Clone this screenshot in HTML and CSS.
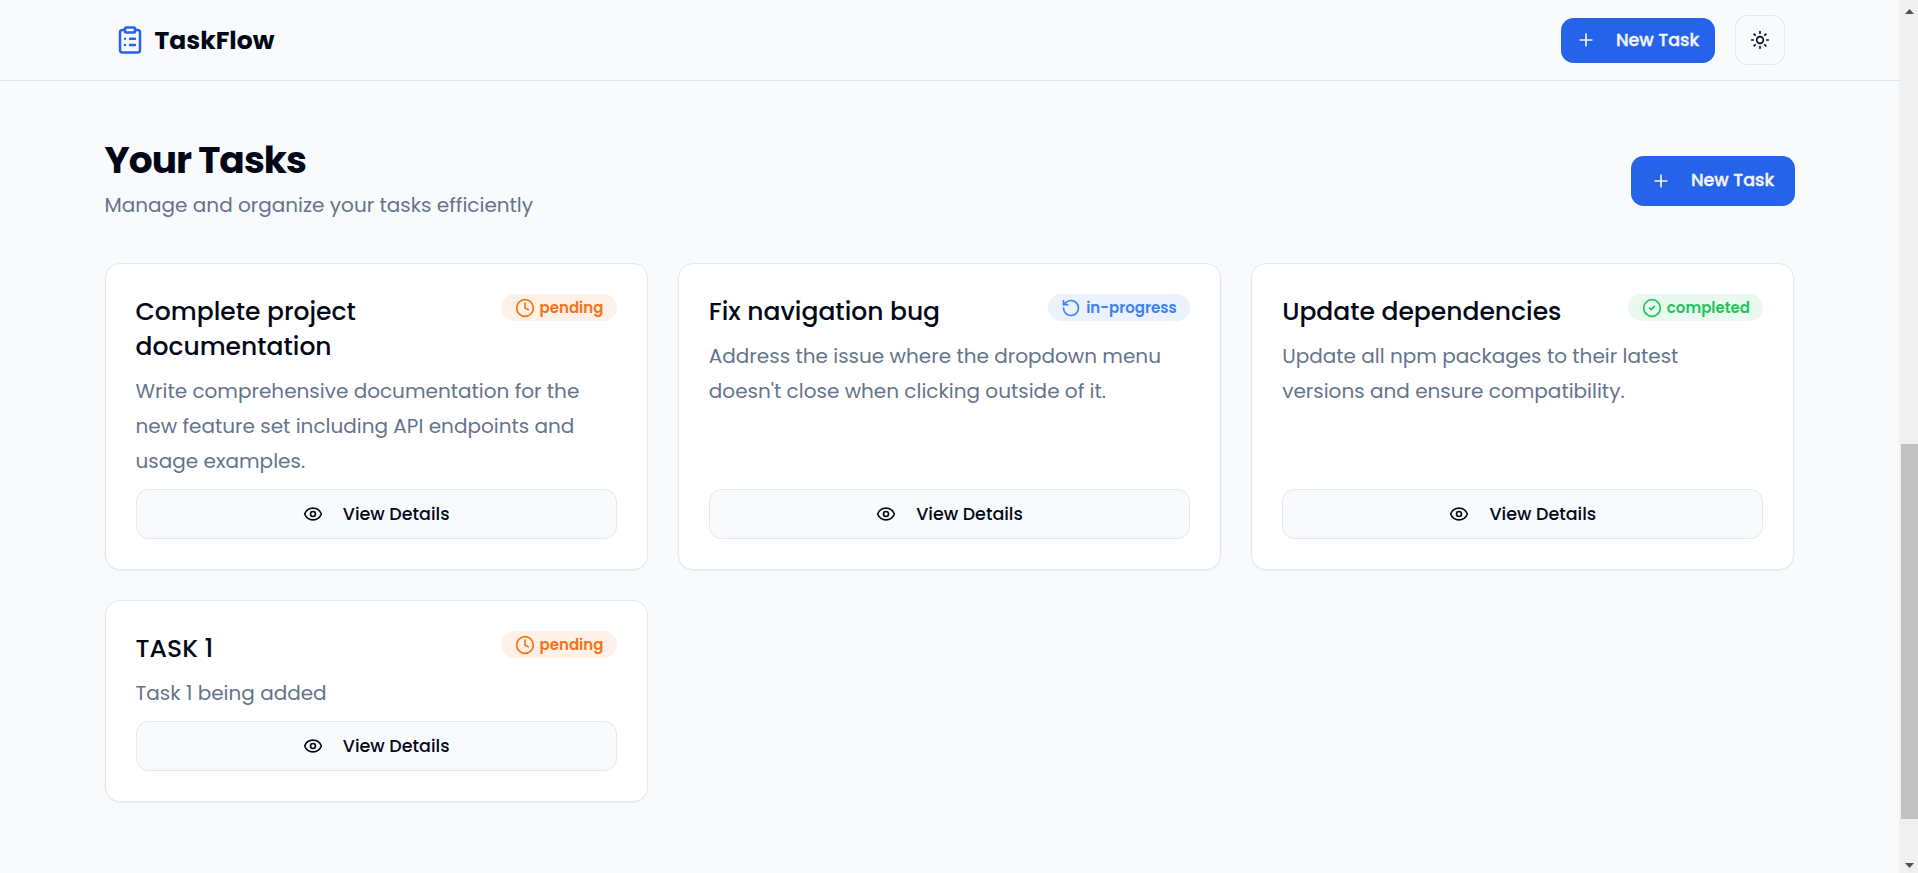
FILE: index.html
```html
<!DOCTYPE html>
<html lang="en">
<head>
<meta charset="utf-8">
<title>TaskFlow</title>
<link rel="stylesheet" href="styles.css">
</head>
<body>
<svg width="0" height="0" class="sprite" aria-hidden="true">
  <symbol id="plus" viewBox="0 0 24 24"><path d="M5 12h14M12 5v14"/></symbol>
  <symbol id="eye" viewBox="0 0 24 24"><path d="M2.06 12.35a1 1 0 0 1 0-.7 10.75 10.75 0 0 1 19.88 0 1 1 0 0 1 0 .7 10.75 10.75 0 0 1-19.88 0"/><circle cx="12" cy="12" r="3"/></symbol>
  <symbol id="clock" viewBox="0 0 24 24"><circle cx="12" cy="12" r="10"/><path d="M12 6v6l4 2"/></symbol>
  <symbol id="rotate" viewBox="0 0 24 24"><path d="M3 12a9 9 0 1 0 9-9 9.75 9.75 0 0 0-6.74 2.74L3 8"/><path d="M3 3v5h5"/></symbol>
  <symbol id="check" viewBox="0 0 24 24"><circle cx="12" cy="12" r="10"/><path d="m9 12 2 2 4-4"/></symbol>
</svg>
<div class="window">
  <div class="page">
    <header class="header">
      <div class="header-inner">
        <div class="brand">
          <svg class="brand-icon" viewBox="0 0 24 24"><rect x="8" y="2" width="8" height="4" rx="1"/><path d="M16 4h2a2 2 0 0 1 2 2v14a2 2 0 0 1-2 2H6a2 2 0 0 1-2-2V6a2 2 0 0 1 2-2h2M12 11h4M12 16h4M8 11h.01M8 16h.01"/></svg>
          <span class="brand-name">TaskFlow</span>
        </div>
        <div class="actions">
          <button class="btn-primary compact"><svg class="icon"><use href="#plus"/></svg><span>New Task</span></button>
          <button class="toggle"><svg class="icon" viewBox="0 0 24 24"><circle cx="12" cy="12" r="4"/><path d="M12 2v2M12 20v2M4.93 4.93l1.41 1.41M17.66 17.66l1.41 1.41M2 12h2M20 12h2M6.34 17.66l-1.41 1.41M19.07 4.93l-1.41 1.41"/></svg></button>
        </div>
      </div>
    </header>
    <main class="main">
      <div class="intro">
        <div class="intro-text">
          <h1 class="heading">Your Tasks</h1>
          <p class="subtitle">Manage and organize your tasks efficiently</p>
        </div>
        <button class="btn-primary"><svg class="icon"><use href="#plus"/></svg><span class="raised">New Task</span></button>
      </div>
      <div class="grid">
        <article class="card">
          <div class="card-top"><h2 class="title">Complete project documentation</h2><span class="badge pending"><svg class="icon"><use href="#clock"/></svg><span>pending</span></span></div>
          <p class="desc">Write comprehensive documentation for the new feature set including API endpoints and usage examples.</p>
          <button class="btn-view"><svg class="icon"><use href="#eye"/></svg><span>View Details</span></button>
        </article>
        <article class="card">
          <div class="card-top"><h2 class="title">Fix navigation bug</h2><span class="badge progress"><svg class="icon"><use href="#rotate"/></svg><span>in-progress</span></span></div>
          <p class="desc">Address the issue where the dropdown menu doesn't close when clicking outside of it.</p>
          <button class="btn-view"><svg class="icon"><use href="#eye"/></svg><span>View Details</span></button>
        </article>
        <article class="card">
          <div class="card-top"><h2 class="title">Update dependencies</h2><span class="badge completed"><svg class="icon"><use href="#check"/></svg><span>completed</span></span></div>
          <p class="desc">Update all npm packages to their latest versions and ensure compatibility.</p>
          <button class="btn-view"><svg class="icon"><use href="#eye"/></svg><span>View Details</span></button>
        </article>
        <article class="card">
          <div class="card-top"><h2 class="title">TASK 1</h2><span class="badge pending"><svg class="icon"><use href="#clock"/></svg><span>pending</span></span></div>
          <p class="desc">Task 1 being added</p>
          <button class="btn-view"><svg class="icon"><use href="#eye"/></svg><span>View Details</span></button>
        </article>
      </div>
    </main>
  </div>
  <div class="scrollbar">
    <svg class="arrow" viewBox="0 0 9 5"><path d="M4.5 0 9 5H0z"/></svg>
    <div class="thumb"></div>
    <svg class="arrow" viewBox="0 0 9 5"><path d="M4.5 5 9 0H0z"/></svg>
  </div>
</div>
</body>
</html>
```

FILE: styles.css
```css
* { box-sizing: border-box; margin: 0; padding: 0; }
body {
  font-family: Poppins, Inter, sans-serif;
  background: #f9fafc;
  color: #020817;
  overflow: hidden;
}
.sprite { display: block; }
.window { display: flex; height: 873px; }
.page { flex: 1; }
svg { flex: none; fill: none; stroke: currentColor; stroke-width: 2; stroke-linecap: round; stroke-linejoin: round; }
.icon { width: 20px; height: 20px; }

.header { height: 81px; border-bottom: 1px solid #dbe5f1; }
.header-inner { height: 80px; margin: 0 104.5px; padding: 0 10px; display: flex; align-items: center; justify-content: space-between; }
.brand { display: flex; align-items: center; gap: 10px; }
.brand-icon { width: 30px; height: 30px; color: #2563eb; }
.brand-name { font-size: 25px; font-weight: 700; line-height: 35px; }
.actions { display: flex; align-items: center; gap: 20px; }

button { font-family: inherit; font-size: 17.5px; line-height: 25px; white-space: nowrap; display: flex; align-items: center; justify-content: center; gap: 20px; color: inherit; }
.btn-primary { width: 164px; height: 50px; border: 0; border-radius: 12.5px; background: #2563eb; color: #f1f5fd; font-weight: 500; -webkit-text-stroke: 0.4px #f1f5fd; }
.btn-primary.compact { width: 154px; height: 45px; }
.raised { margin-bottom: 2px; }
.toggle { width: 50px; height: 50px; border: 1px solid #e2e8f0; border-radius: 12.5px; background: #f9fafc; }

.main { padding: 55px 104.5px 0; }
.intro { display: flex; align-items: center; justify-content: space-between; height: 90px; }
.intro-text { padding-bottom: 2px; }
.heading { font-size: 37.5px; line-height: 45px; font-weight: 700; letter-spacing: -0.9375px; }
.subtitle { font-size: 20px; line-height: 35px; margin-top: 5px; color: #64748b; }

.grid { display: grid; grid-template-columns: repeat(3, 1fr); gap: 30px; margin-top: 37px; }
.card { display: flex; flex-direction: column; padding: 30px; background: #fff; border: 1px solid #e2e8f0; border-radius: 15px; box-shadow: 0 1px 2px rgba(0, 0, 0, 0.05); }
.card-top { display: flex; align-items: flex-start; justify-content: space-between; gap: 40px; }
.title { font-size: 25px; line-height: 35px; font-weight: 500; }
.desc { margin: 10px 0; font-size: 20px; line-height: 35px; color: #64748b; }
.badge { display: flex; align-items: center; gap: 5px; height: 27px; padding: 0 13.5px; border-radius: 14px; font-size: 15px; font-weight: 600; white-space: nowrap; }
.pending { background: #fef1e8; color: #f97316; }
.progress { background: #ebf2fe; color: #3b82f6; }
.completed { background: #e9f9ef; color: #22c55e; }
.btn-view { height: 50px; margin-top: auto; border: 1px solid #e2e8f0; border-radius: 12.5px; background: #f9fafc; font-weight: 500; }

.scrollbar { width: 19px; background: #f0f0f0; padding: 9px 0 5px 2px; display: flex; flex-direction: column; align-items: center; justify-content: space-between; }
.thumb { width: 17px; height: 375px; margin-top: 386px; background: #c1c1c1; }
.arrow { width: 9px; height: 5px; fill: #505050; stroke: none; }
```
